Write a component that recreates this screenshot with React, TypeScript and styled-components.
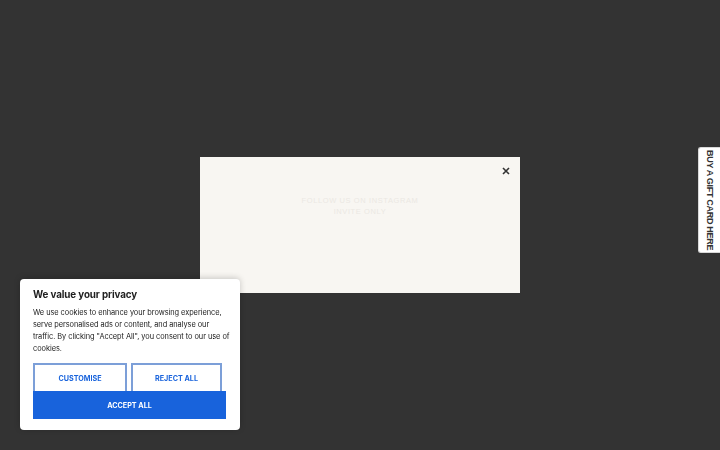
import styled, { createGlobalStyle } from "styled-components";

const GlobalStyle = createGlobalStyle`
  html, body {
    margin: 0;
    padding: 0;
    width: 100%;
    height: 100%;
    background: #333333;
    overflow: hidden;
  }
  #root {
    height: 100%;
  }
`;

const Page = styled.div`
  position: relative;
  width: 100%;
  height: 100%;
  background: #333333;
`;

const Overlay = styled.div`
  position: fixed;
  inset: 0;
  display: flex;
  align-items: center;
  justify-content: center;
`;

const Modal = styled.div`
  position: relative;
  width: 320px;
  height: 136px;
  background: #f8f6f2;
  box-sizing: border-box;
  padding-top: 38px;
  display: flex;
  flex-direction: column;
  align-items: center;
`;

const CloseButton = styled.button`
  position: absolute;
  top: 6px;
  right: 6px;
  width: 16px;
  height: 16px;
  padding: 0;
  border: none;
  background: transparent;
  color: #333;
  cursor: pointer;
  display: flex;
  align-items: center;
  justify-content: center;
`;

const Faint = styled.p`
  margin: 0;
  font-family: "Liberation Sans", Arial, sans-serif;
  font-size: 7.5px;
  line-height: 11px;
  letter-spacing: 0.6px;
  color: #ebe8e3;
  text-align: center;
  text-transform: uppercase;
`;

const GiftTab = styled.a`
  position: fixed;
  right: 0;
  top: 147px;
  width: 22px;
  height: 106px;
  box-sizing: border-box;
  background: #ffffff;
  border: 1px solid #d8d8d8;
  border-right: none;
  border-radius: 3px 0 0 3px;
  display: flex;
  align-items: center;
  justify-content: center;
  text-decoration: none;
`;

const GiftLabel = styled.span`
  writing-mode: vertical-rl;
  font-family: "Liberation Sans", Arial, sans-serif;
  font-weight: 700;
  font-size: 9px;
  letter-spacing: -0.3px;
  color: #333333;
  white-space: nowrap;
`;

const Banner = styled.div`
  position: fixed;
  left: 20px;
  bottom: 20px;
  width: 220px;
  box-sizing: border-box;
  background: #ffffff;
  border-radius: 4px;
  padding: 10px 14px 11px 13px;
  font-family: "Inter", "Noto Sans", sans-serif;
  box-shadow: 0 -1px 6px rgba(0, 0, 0, 0.2);
`;

const Title = styled.h2`
  margin: 0 0 6px;
  font-size: 9.8px;
  font-weight: 700;
  line-height: 12px;
  color: #212121;
  letter-spacing: -0.1px;
`;

const Body = styled.p`
  margin: 0 0 8px;
  font-size: 7.4px;
  line-height: 12px;
  letter-spacing: -0.05px;
  color: #212121;
`;

const Line = styled.span`
  display: block;
  white-space: nowrap;
`;

const Row = styled.div`
  display: flex;
  gap: 4px;
`;

const OutlineButton = styled.button<{ $w: number }>`
  width: ${(p) => p.$w}px;
  height: 28px;
  box-sizing: border-box;
  background: #ffffff;
  border: 2px solid #7c9fd8;
  border-bottom: none;
  color: #1863dc;
  font-family: inherit;
  font-size: 7.2px;
  font-weight: 700;
  cursor: pointer;
  padding: 0;
`;

const AcceptButton = styled.button`
  display: block;
  width: 193px;
  height: 28px;
  border: none;
  background: #1863dc;
  color: #ffffff;
  font-family: inherit;
  font-size: 7.2px;
  font-weight: 700;
  cursor: pointer;
  padding: 0;
`;

const bodyLines = [
  "We use cookies to enhance your browsing experience,",
  "serve personalised ads or content, and analyse our",
  'traffic. By clicking "Accept All", you consent to our use of',
  "cookies.",
];

export default function App() {
  return (
    <Page>
      <GlobalStyle />
      <Overlay>
        <Modal>
          <CloseButton aria-label="Close">
            <svg width="8" height="8" viewBox="0 0 8 8">
              <path d="M1 1L7 7M7 1L1 7" stroke="#333" strokeWidth="1.6" />
            </svg>
          </CloseButton>
          <Faint>Follow us on Instagram</Faint>
          <Faint>Invite only</Faint>
        </Modal>
      </Overlay>
      <GiftTab href="#">
        <GiftLabel>BUY A GIFT CARD HERE</GiftLabel>
      </GiftTab>
      <Banner>
        <Title>We value your privacy</Title>
        <Body>
          {bodyLines.map((l) => (
            <Line key={l}>{l}</Line>
          ))}
        </Body>
        <Row>
          <OutlineButton $w={94}>CUSTOMISE</OutlineButton>
          <OutlineButton $w={91}>REJECT ALL</OutlineButton>
        </Row>
        <AcceptButton>ACCEPT ALL</AcceptButton>
      </Banner>
    </Page>
  );
}
